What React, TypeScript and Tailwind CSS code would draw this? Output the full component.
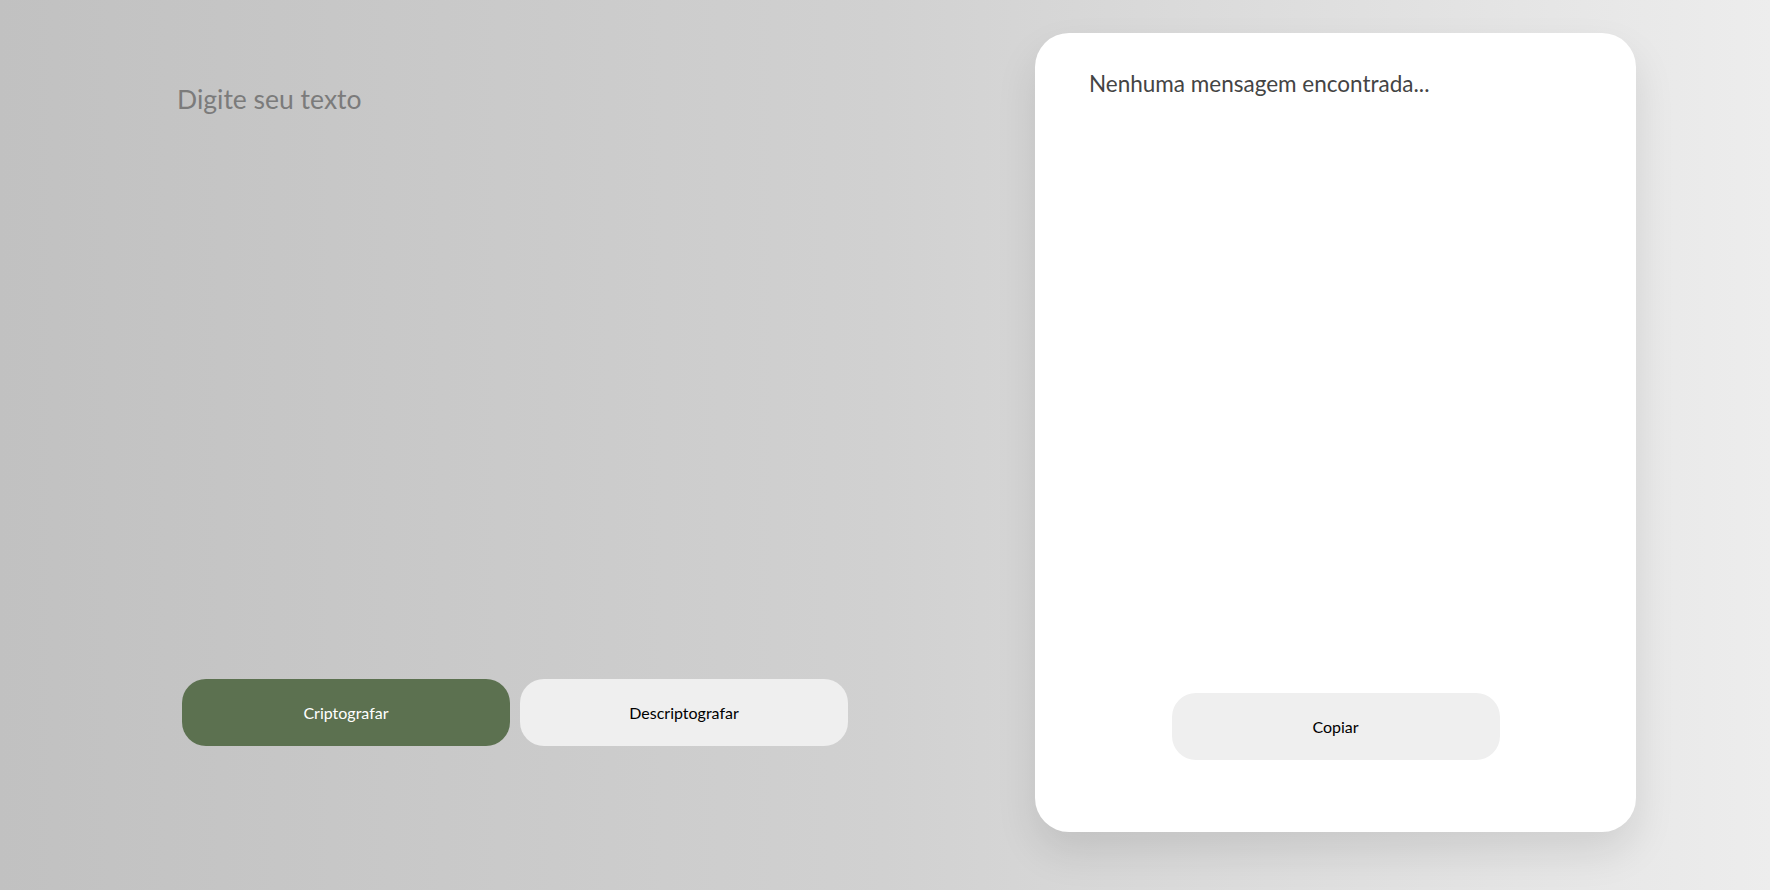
import { useState } from "react";

export default function App() {
  const [text, setText] = useState("");

  return (
    <main className="flex h-[890px] w-full items-start bg-gradient-to-r from-[#c1c1c1] via-[#d1d1d1] to-[#ededed] font-['Lato','Noto_Sans',sans-serif]">
      <section className="ml-[177px] flex w-[690px] flex-col pt-[82px]">
        <textarea
          value={text}
          onChange={(e) => setText(e.target.value)}
          placeholder="Digite seu texto"
          className="h-[582px] w-full resize-none border-none bg-transparent text-[26.5px] leading-[34px] text-[#555] outline-none placeholder:text-[#7b7b7b]"
        />
        <div className="mt-[15px] ml-[5px] flex gap-[10px]">
          <button className="h-[67px] w-[328px] rounded-[24px] bg-[#5c7150] text-[16px] text-white">
            Criptografar
          </button>
          <button className="h-[67px] w-[328px] rounded-[24px] bg-[#efefef] text-[16px] text-black">
            Descriptografar
          </button>
        </div>
      </section>

      <aside className="mt-[33px] mr-[134px] ml-auto flex h-[799px] w-[601px] flex-col rounded-[34px] bg-white px-[54px] pt-[36px] shadow-[0_20px_40px_rgba(0,0,0,0.10)]">
        <p className="text-[22.5px] leading-[30px] text-[#444]">Nenhuma mensagem encontrada...</p>
        <button className="mt-auto mb-[72px] h-[67px] w-[328px] self-center rounded-[24px] bg-[#efefef] text-[16px] text-black">
          Copiar
        </button>
      </aside>
    </main>
  );
}
